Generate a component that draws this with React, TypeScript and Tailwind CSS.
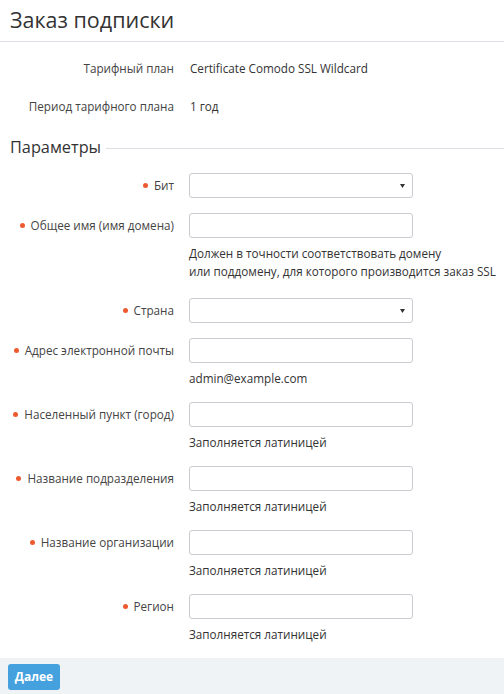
const fields: { label: string; select?: boolean; hint?: string[] }[] = [
  { label: "Бит", select: true },
  {
    label: "Общее имя (имя домена)",
    hint: ["Должен в точности соответствовать домену", "или поддомену, для которого производится заказ SSL"],
  },
  { label: "Страна", select: true },
  { label: "Адрес электронной почты", hint: ["admin@example.com"] },
  { label: "Населенный пункт (город)", hint: ["Заполняется латиницей"] },
  { label: "Название подразделения", hint: ["Заполняется латиницей"] },
  { label: "Название организации", hint: ["Заполняется латиницей"] },
  { label: "Регион", hint: ["Заполняется латиницей"] },
];

export default function App() {
  return (
    <div
      className="w-[504px] h-[694px] bg-white text-[#333] flex flex-col overflow-hidden"
      style={{ fontFamily: '"Open Sans", "Liberation Sans", sans-serif' }}
    >
      {/* Header */}
      <div className="h-[42px] border-b border-[#dcdfe3] pl-[10px] pt-[5px] shrink-0">
        <h1 className="text-[21.5px] leading-[30px] font-normal text-[#333]">Заказ подписки</h1>
      </div>

      {/* Plan info */}
      <div className="mt-[8px] text-[11.7px]">
        <div className="grid grid-cols-[174px_1fr] gap-x-[16px] h-[38px] items-center">
          <span className="text-right text-[#444]">Тарифный план</span>
          <span>Certificate Comodo SSL Wildcard</span>
        </div>
        <div className="grid grid-cols-[174px_1fr] gap-x-[16px] h-[38px] items-center">
          <span className="text-right text-[#444]">Период тарифного плана</span>
          <span>1 год</span>
        </div>
      </div>

      {/* Parameters legend */}
      <div className="flex items-center h-[22px] mt-[10px] pl-[10px]">
        <span className="text-[16.3px] leading-[22px] text-[#333]">Параметры</span>
        <div className="flex-1 h-px bg-[#dcdfe3] ml-[5px] mt-[2px]" />
      </div>

      {/* Fields */}
      <div className="mt-[15px] flex-1 text-[11.7px]">
        {fields.map((f) => (
          <div key={f.label} className="grid grid-cols-[174px_224px] gap-x-[15px] mb-[15px]">
            <div className="h-[25px] flex items-center justify-end gap-[6px] text-[#444]">
              <span className="w-[5px] h-[5px] rounded-full bg-[#ee5a2f] shrink-0" />
              <span>{f.label}</span>
            </div>
            <div>
              <div className="h-[25px] border border-[#c8ccd0] rounded-[3px] bg-white flex items-center justify-end pr-[7px]">
                {f.select && (
                  <svg width="5" height="4" viewBox="0 0 5 4">
                    <path d="M0 0h5L2.5 4z" fill="#333" />
                  </svg>
                )}
              </div>
              {f.hint && (
                <div
                  className={
                    f.hint.length > 1
                      ? "mt-[6px] pb-[3px] leading-[18px] text-[#333] whitespace-nowrap"
                      : "mt-[6px] leading-[18px] text-[#333] whitespace-nowrap"
                  }
                >
                  {f.hint.map((h) => (
                    <div key={h}>{h}</div>
                  ))}
                </div>
              )}
            </div>
          </div>
        ))}
      </div>

      {/* Footer */}
      <div className="h-[37px] bg-[#eff3f6] pl-[8px] pt-[5px] shrink-0">
        <button className="w-[52px] h-[26px] rounded-[3px] bg-[#45a1de] text-white text-[12px] font-bold">
          Далее
        </button>
      </div>
    </div>
  );
}
